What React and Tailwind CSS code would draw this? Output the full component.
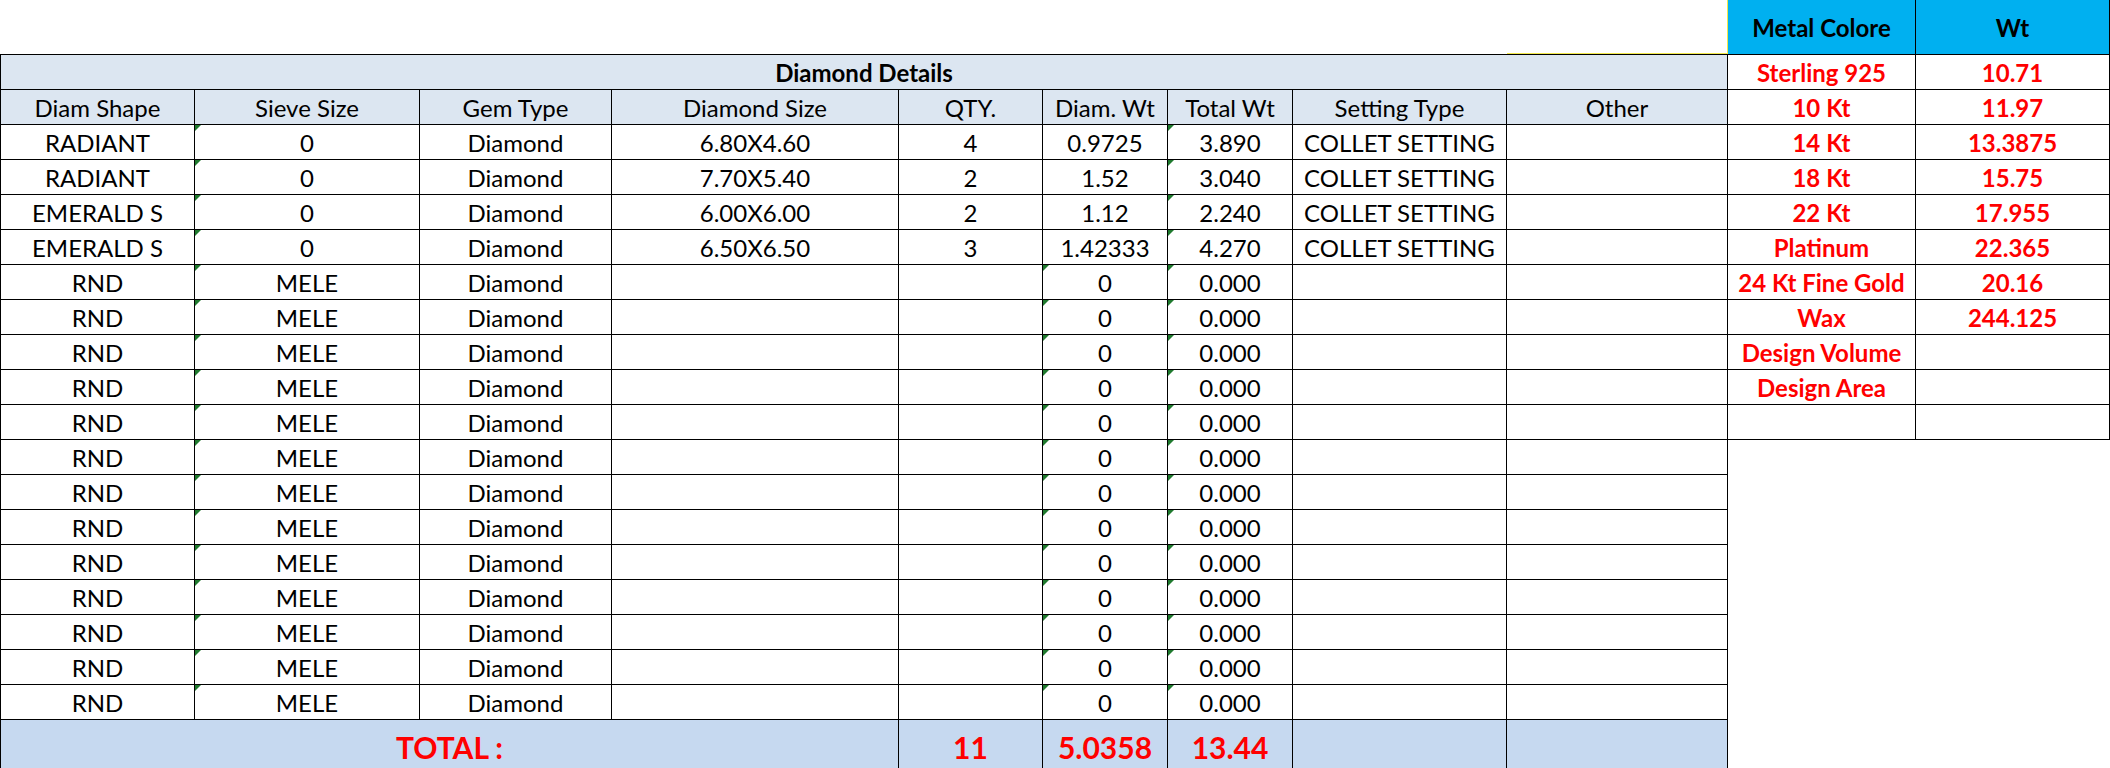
import React from "react";

const font = { fontFamily: "Lato, 'Liberation Sans', sans-serif" };

const rows = [
  ["RADIANT", "0", "Diamond", "6.80X4.60", "4", "0.9725", "3.890", "COLLET SETTING", ""],
  ["RADIANT", "0", "Diamond", "7.70X5.40", "2", "1.52", "3.040", "COLLET SETTING", ""],
  ["EMERALD S", "0", "Diamond", "6.00X6.00", "2", "1.12", "2.240", "COLLET SETTING", ""],
  ["EMERALD S", "0", "Diamond", "6.50X6.50", "3", "1.42333", "4.270", "COLLET SETTING", ""],
];
for (let i = 0; i < 13; i++) {
  rows.push(["RND", "MELE", "Diamond", "", "", "0", "0.000", "", ""]);
}

const headers = [
  "Diam Shape",
  "Sieve Size",
  "Gem Type",
  "Diamond Size",
  "QTY.",
  "Diam. Wt",
  "Total Wt",
  "Setting Type",
  "Other",
];

const metals = [
  ["Sterling 925", "10.71"],
  ["10 Kt", "11.97"],
  ["14 Kt", "13.3875"],
  ["18 Kt", "15.75"],
  ["22 Kt", "17.955"],
  ["Platinum", "22.365"],
  ["24 Kt Fine Gold", "20.16"],
  ["Wax", "244.125"],
  ["Design Volume", ""],
  ["Design Area", ""],
  ["", ""],
];

function Tri() {
  return (
    <span className="absolute left-0 top-0 h-0 w-0 border-t-[6px] border-r-[6px] border-t-[#1f7a2e] border-r-transparent" />
  );
}

export default function App() {
  return (
    <div
      className="flex h-[768px] w-[2110px] items-start overflow-hidden bg-white text-black"
      style={font}
    >
      {/* Main table */}
      <div className="flex w-[1728px] shrink-0 flex-col">
        <div className="flex h-[54px] justify-end">
          <div className="h-[54px] w-[221px] border-b border-r border-[#f2e84a]" />
        </div>
        <div className="grid grid-cols-[195px_225px_192px_287px_144px_125px_125px_214px_221px] border-t border-black text-[24px] leading-none">
          <div className="col-span-9 flex h-[35px] items-center justify-center border-b border-l border-r border-black bg-[#dce6f1] pt-[2px] font-bold">
            Diamond Details
          </div>
          {headers.map((h, i) => (
            <div
              key={h}
              className={`flex h-[35px] items-center justify-center border-b border-r border-black bg-[#dce6f1] pt-[2px] ${
                i === 0 ? "border-l" : ""
              }`}
            >
              {h}
            </div>
          ))}
          {rows.map((r, ri) =>
            r.map((c, ci) => {
              const isRnd = ri >= 4;
              const tri =
                ci === 1 || ci === 6 || (ci === 5 && isRnd);
              return (
                <div
                  key={`${ri}-${ci}`}
                  className={`relative flex h-[35px] items-center justify-center whitespace-nowrap border-b border-r border-black pt-[2px] ${
                    ci === 0 ? "border-l" : ""
                  }`}
                >
                  {tri && <Tri />}
                  {c}
                </div>
              );
            })
          )}
          <div className="col-span-4 flex h-[52px] items-center justify-center border-l border-r border-black bg-[#c6d9f0] pt-[2px] text-[30px] font-bold text-[#ff0000]">
            TOTAL :
          </div>
          <div className="flex h-[52px] items-center justify-center border-r border-black bg-[#c6d9f0] pt-[2px] text-[30px] font-bold text-[#ff0000]">
            11
          </div>
          <div className="flex h-[52px] items-center justify-center border-r border-black bg-[#c6d9f0] pt-[2px] text-[30px] font-bold text-[#ff0000]">
            5.0358
          </div>
          <div className="flex h-[52px] items-center justify-center border-r border-black bg-[#c6d9f0] pt-[2px] text-[30px] font-bold text-[#ff0000]">
            13.44
          </div>
          <div className="h-[52px] border-r border-black bg-[#c6d9f0]" />
          <div className="h-[52px] border-r border-black bg-[#c6d9f0]" />
        </div>
      </div>

      {/* Metal table */}
      <div className="grid w-[382px] shrink-0 grid-cols-[188px_194px] text-[24px] font-bold leading-none">
        <div className="flex h-[55px] items-center justify-center border-b border-r border-black bg-[#00b0f0] pt-[2px]">
          Metal Colore
        </div>
        <div className="flex h-[55px] items-center justify-center border-b border-r border-black bg-[#00b0f0] pt-[2px]">
          Wt
        </div>
        {metals.map(([m, w], i) => (
          <React.Fragment key={i}>
            <div className="flex h-[35px] items-center justify-center whitespace-nowrap border-b border-r border-black pt-[2px] text-[#ff0000]">
              {m}
            </div>
            <div className="flex h-[35px] items-center justify-center border-b border-r border-black pt-[2px] text-[#ff0000]">
              {w}
            </div>
          </React.Fragment>
        ))}
      </div>
    </div>
  );
}
